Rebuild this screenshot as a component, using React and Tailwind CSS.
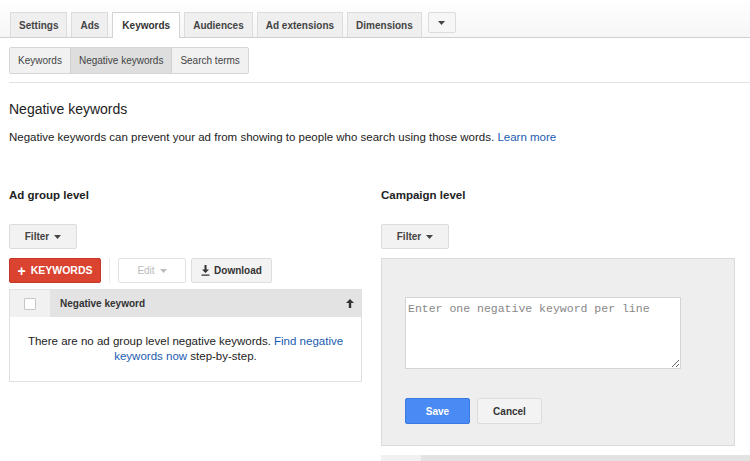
import { useState } from "react";

const tabs = ["Settings", "Ads", "Keywords", "Audiences", "Ad extensions", "Dimensions"];

const Caret = ({ className = "" }) => (
  <svg className={className} width="7" height="4" viewBox="0 0 7 4">
    <path d="M0 0h7L3.5 4z" fill="currentColor" />
  </svg>
);

const App = () => {
  const [activeTab] = useState("Keywords");
  const [subTab] = useState("Negative keywords");

  return (
    <div className="w-[750px] h-[461px] overflow-hidden bg-white text-[#222] font-['Liberation_Sans',Arial,sans-serif]">
      {/* top tabs */}
      <div className="h-[38px] pt-[12px] pl-[10px] flex items-end gap-[4px] border-b border-[#cfcfcf] bg-gradient-to-b from-white to-[#f6f6f6]">
        {tabs.map((t) =>
          t === activeTab ? (
            <div
              key={t}
              className="h-[26px] px-[9px] -mb-px flex items-center bg-white border border-b-0 border-[#d4d4d4] text-[10px] font-bold text-[#333]"
            >
              {t}
            </div>
          ) : (
            <div
              key={t}
              className="h-[25px] px-[8px] flex items-center bg-[#efefef] border border-b-0 border-[#dcdcdc] text-[10px] font-bold text-[#444]"
            >
              {t}
            </div>
          )
        )}
        <div className="ml-[2px] mb-[4px] w-[28px] h-[21px] flex items-center justify-center bg-[#f6f6f6] border border-[#dcdcdc] rounded-[2px] text-[#444]">
          <Caret />
        </div>
      </div>

      {/* sub tabs */}
      <div className="pl-[9px] pt-[9px] pr-0">
        <div className="flex h-[27px] w-fit border border-[#d6d6d6] rounded-[2px] text-[10px] text-[#444]">
          {["Keywords", "Negative keywords", "Search terms"].map((t, i) => (
            <div
              key={t}
              className={`px-[8px] flex items-center ${i > 0 ? "border-l border-[#d0d0d0]" : ""} ${
                t === subTab ? "bg-[#dedede]" : "bg-[#f1f1f1]"
              }`}
            >
              {t}
            </div>
          ))}
        </div>
        <div className="mt-[8px] border-b border-[#e3e3e3]" />
      </div>

      {/* heading */}
      <div className="pl-[9px]">
        <h1 className="mt-[17px] text-[14px] leading-[18px] text-[#222]">Negative keywords</h1>
        <p className="mt-[12px] text-[11.5px] leading-[15px] text-[#222]">
          Negative keywords can prevent your ad from showing to people who search using those words.{" "}
          <span className="text-[#1a5cb0]">Learn more</span>
        </p>
      </div>

      {/* columns */}
      <div className="mt-[43px] pl-[9px] flex gap-[19px]">
        {/* ad group level */}
        <div className="w-[353px]">
          <div className="text-[11.5px] leading-[15px] font-bold">Ad group level</div>
          <button className="mt-[21px] w-[68px] h-[25px] flex items-center justify-center gap-[5px] bg-[#f2f2f2] border border-[#dcdcdc] rounded-[2px] text-[10px] font-bold text-[#444]">
            Filter <Caret />
          </button>
          <div className="mt-[9px] flex items-center">
            <button className="w-[92px] h-[25px] flex items-center justify-center gap-[5px] bg-[#d9432f] border border-[#c53727] rounded-[2px] text-[10.5px] font-bold text-white">
              <span className="text-[14px] leading-none font-bold">+</span> KEYWORDS
            </button>
            <div className="mx-[8px] w-px h-[25px] bg-[#ececec]" />
            <button className="w-[68px] h-[25px] flex items-center justify-center gap-[5px] bg-white border border-[#e2e2e2] rounded-[2px] text-[10px] text-[#bbb]">
              Edit <Caret />
            </button>
            <button className="ml-[5px] w-[81px] h-[25px] flex items-center justify-center gap-[4px] bg-[#f3f3f3] border border-[#dedede] rounded-[2px] text-[10px] font-bold text-[#333]">
              <svg width="9" height="11" viewBox="0 0 9 11">
                <path d="M3.5 0h2v4.5H8L4.5 8 1 4.5h2.5z M0.5 9.5h8v1.2h-8z" fill="#333" />
              </svg>
              Download
            </button>
          </div>
          <div className="mt-[6px] border border-[#e0e0e0]">
            <div className="flex h-[27px] bg-[#e3e3e3]">
              <div className="w-[40px] flex items-center justify-center bg-[#f1f1f1]">
                <div className="w-[12px] h-[12px] bg-white border border-[#c6c6c6] rounded-[1px]" />
              </div>
              <div className="flex-1 flex items-center justify-between pl-[10px] pr-[7px] text-[10px] font-bold text-[#333]">
                Negative keyword
                <svg width="8" height="9" viewBox="0 0 8 9">
                  <path d="M4 0L8 4H5.2V9H2.8V4H0z" fill="#333" />
                </svg>
              </div>
            </div>
            <div className="h-[64px] pt-[17px] px-[10px] flex flex-col items-center text-[11.5px] leading-[15px] text-[#222]">
              <div>
                There are no ad group level negative keywords.{" "}
                <span className="text-[#1a5cb0]">Find negative</span>
              </div>
              <div>
                <span className="text-[#1a5cb0]">keywords now</span> step-by-step.
              </div>
            </div>
          </div>
        </div>

        {/* campaign level */}
        <div className="flex-1">
          <div className="text-[11.5px] leading-[15px] font-bold">Campaign level</div>
          <button className="mt-[21px] w-[68px] h-[25px] flex items-center justify-center gap-[5px] bg-[#f2f2f2] border border-[#dcdcdc] rounded-[2px] text-[10px] font-bold text-[#444]">
            Filter <Caret />
          </button>
          <div className="mt-[9px] w-[354px] h-[188px] bg-[#eeeeee] border border-[#dadada] pt-[38px] pl-[23px]">
            <textarea
              className="block w-[276px] h-[72px] bg-white border border-[#d4d4d4] px-[2px] py-[2px] text-[11.5px] font-['Liberation_Mono','Courier_New',monospace] text-[#333] placeholder:text-[#888] resize-y outline-none"
              placeholder="Enter one negative keyword per line"
            />
            <div className="mt-[29px] flex gap-[7px]">
              <button className="w-[65px] h-[26px] bg-[#4a8af4] border border-[#3b7ae0] rounded-[2px] text-[10px] font-bold text-white">
                Save
              </button>
              <button className="w-[65px] h-[26px] bg-[#f3f3f3] border border-[#dcdcdc] rounded-[2px] text-[10px] font-bold text-[#333]">
                Cancel
              </button>
            </div>
          </div>
          <div className="mt-[9px] flex h-[27px] bg-[#e3e3e3]">
            <div className="w-[40px] bg-[#f1f1f1]" />
            <div className="flex-1" />
          </div>
        </div>
      </div>
    </div>
  );
};

export default App;
